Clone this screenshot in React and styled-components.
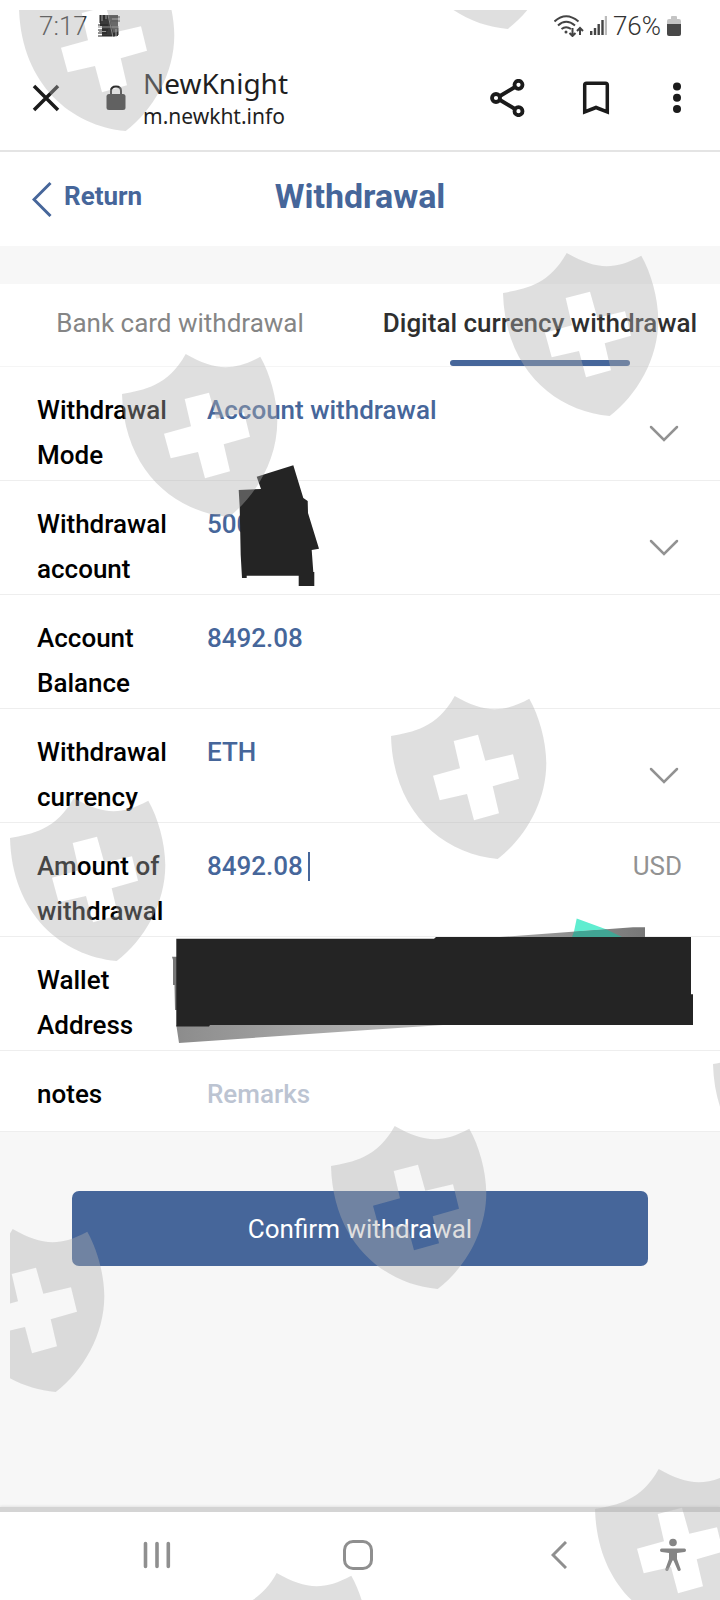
import React, { useState } from 'react';
import styled, { createGlobalStyle } from 'styled-components';

const SHIELDS = [
  [19, 8], [401, -94], [503, 293], [122, 394], [391, 736], [10, 838],
  [713, 1064], [331, 1166], [-51, 1269], [595, 1509], [213, 1613],
];

const Chevron = () => (
  <ChevronIcon viewBox="0 0 36 20" aria-hidden="true">
    <path d="M5 4 L18 17 L31 4" />
  </ChevronIcon>
);

const StatusIcons = () => (
  <>
    <svg width="30" height="22" viewBox="549 15 30 22" fill="none" stroke="#444" strokeWidth="2" aria-hidden="true">
      <path d="M549.500 21.500 Q561 11 573.500 21.500 M553 25.500 Q561 18 570 25.500 M556.500 29 Q561 25.500 566 29" />
      <circle cx="561" cy="32" r="1.500" fill="#444" stroke="none" />
      <path d="M567.500 28 V35.500 M564.500 33 L567.500 36 L570.500 33 M575 35 V28 M572 31 L575 28 L578 31" />
    </svg>
    <svg width="17" height="20" viewBox="585 17 17 20" strokeWidth="2.400" stroke="#444" aria-hidden="true">
      <path d="M586.200 32 V36 M590 29 V36 M593.700 25 V36 M597.500 21 V36" />
      <path d="M601 17 V36" stroke="#bbb" />
    </svg>
  </>
);

const Watermark = () => (
  <WatermarkLayer aria-hidden="true">
    {SHIELDS.map(([x, y]) => (
      <path
        key={`${x},${y}`}
        transform={`translate(${x - 10} ${y - 10})`}
        fillRule="evenodd"
        d="M0 0 C22 -4 46 -8 63.700 -40 C92 -24 110 -22 138.300 -37.300 C148 -20 155 4 155.300 27 C155.300 66 134 102 106.700 123 C52 118 2 76 0 0 Z M62.700 5 L87 -1.300 L94.300 24.700 L122 18.300 L128 42.700 L101.700 50.300 L108 77.300 L83 84.300 L76 58 L48.700 64.300 L42 39.700 L69 32.300 Z"
      />
    ))}
  </WatermarkLayer>
);

const App = () => {
  const [amount, setAmount] = useState('8492.08');
  const [notes, setNotes] = useState('');
  const [wallet, setWallet] = useState('');

  return (
    <Page>
      <GlobalStyle />
      <StatusBar>
        <StatusText>7:17</StatusText>
        <Scribble viewBox="0 0 22 22" aria-hidden="true">
          <path d="M2 0 H20 V21 H4 V11 H2 Z" fill="#3a3a3a" />
          <path d="M0 12 H21 M10 0 L15 22" stroke="#888" />
          <path d="M0 10 H10 M0 15 H10 M0 18 H9 M0 21 H14 M2 0 V8 M6 0 V5 M12 2 H22 M13 6 H22 M16 14 V22 M20 13 V20" stroke="#222" />
          <path d="M4 0 V6 M8 0 V4 M14 4 H22 M1 16.500 H8 M18 14 V22" stroke="#999" />
        </Scribble>
        <StatusRight>
          <StatusIcons />
          <StatusText>76%</StatusText>
          <svg width="14" height="21" viewBox="0 0 14 21" aria-hidden="true">
            <path d="M0 9 V5 Q0 3 2 3 H4 V1 Q4 0 5 0 H9 Q10 0 10 1 V3 H12 Q14 3 14 5 V9 Z" fill="#c4c4c4" />
            <path d="M0 8 H14 V18 Q14 20 12 20 H2 Q0 20 0 18 Z" fill="#484848" />
          </svg>
        </StatusRight>
      </StatusBar>

      <BrowserBar>
        <IconButton $width={36} aria-label="Close">
          <svg width="28" height="28" viewBox="0 0 28 28" stroke="#1b1b1b" strokeWidth="3.500" aria-hidden="true">
            <path d="M2 2 L26 26 M26 2 L2 26" />
          </svg>
        </IconButton>
        <Lock viewBox="0 0 20 26" aria-hidden="true">
          <rect x="0.500" y="9" width="19" height="16" rx="2.500" />
          <path d="M5 10 V6 Q5 1.500 10 1.500 Q15 1.500 15 6 V10" fill="none" stroke="#2e2e2e" strokeWidth="2" />
        </Lock>
        <SiteInfo>
          <SiteName>NewKnight</SiteName>
          <SiteUrl>m.newkht.info</SiteUrl>
        </SiteInfo>
        <Actions>
          <IconButton $width={44} aria-label="Share">
            <svg width="36" height="38" viewBox="0 0 36 38" fill="none" stroke="#1b1b1b" strokeWidth="3.800" aria-hidden="true">
              <path d="M11 17 L26 8 M11 21 L26 30" />
              <circle cx="7" cy="19" r="4" />
              <circle cx="29.500" cy="5.800" r="4" />
              <circle cx="29.500" cy="32.200" r="4" />
            </svg>
          </IconButton>
          <IconButton $width={44} aria-label="Bookmark">
            <svg width="28" height="34" viewBox="0 0 28 34" fill="none" stroke="#1b1b1b" strokeWidth="3.500" aria-hidden="true">
              <path d="M2.700 31 V4 Q2.700 2.200 4.500 2.200 H23.500 Q25.300 2.200 25.300 4 V31 L14 26.500 Z" />
            </svg>
          </IconButton>
          <IconButton $width={28} aria-label="More">
            <svg width="8" height="32" viewBox="0 0 8 32" fill="#1b1b1b" aria-hidden="true">
              <circle cx="4" cy="4.500" r="4" />
              <circle cx="4" cy="15.700" r="4" />
              <circle cx="4" cy="27" r="4" />
            </svg>
          </IconButton>
        </Actions>
      </BrowserBar>

      <Header>
        <BackLink href="#back">
          <svg width="20" height="36" viewBox="0 0 20 36" fill="none" stroke="#46669a" strokeWidth="3" aria-hidden="true">
            <path d="M18.500 2 L2 18.500 L18.500 35" />
          </svg>
          <span>Return</span>
        </BackLink>
        <Title>Withdrawal</Title>
      </Header>

      <Tabs>
        <Tab>Bank card withdrawal</Tab>
        <Tab $active>Digital currency withdrawal</Tab>
      </Tabs>

      <Form id="withdrawal" onSubmit={(e) => e.preventDefault()}>
        <Row>
          <Label htmlFor="mode">Withdrawal Mode</Label>
          <Field>
            <Select id="mode"><option>Account withdrawal</option></Select>
          </Field>
          <Chevron />
        </Row>
        <Row>
          <Label htmlFor="account">Withdrawal account</Label>
          <Field>
            <Select id="account"><option>500</option></Select>
            <AccountMask viewBox="237 464 84 124" aria-hidden="true">
              <path d="M238.700 490 L261 489 L256.700 476.700 L293.300 465.300 L303.300 498 L307.700 501 L308 513 L319 548.700 L311.700 550 L313.300 572 L314.300 572 V586 H298.700 V575.700 H246.700 V578 H242 L240.700 555 L239.700 507 Z" fill="#242424" />
            </AccountMask>
          </Field>
          <Chevron />
        </Row>
        <Row>
          <Label as="span">Account Balance</Label>
          <Field>8492.08</Field>
        </Row>
        <Row>
          <Label htmlFor="currency">Withdrawal currency</Label>
          <Field>
            <Select id="currency"><option>ETH</option></Select>
          </Field>
          <Chevron />
        </Row>
        <Row>
          <Label htmlFor="amount">Amount of withdrawal</Label>
          <Field>
            <AmountInput id="amount" value={amount} onChange={(e) => setAmount(e.target.value)} />
            <Caret />
          </Field>
          <Unit>USD</Unit>
        </Row>
        <Row>
          <Label htmlFor="wallet">Wallet Address</Label>
          <Field>
            <Input id="wallet" value={wallet} onChange={(e) => setWallet(e.target.value)} />
            <WalletMask viewBox="170 918 526 128" aria-hidden="true">
              <defs>
                <linearGradient id="upper"><stop offset="0" stopColor="#aaa" /><stop offset="1" stopColor="#777" /></linearGradient>
                <linearGradient id="lower"><stop offset="0" stopColor="#8c8c8c" /><stop offset="0.500" stopColor="#a6a6a6" /><stop offset="1" stopColor="#bbb" /></linearGradient>
              </defs>
              <path d="M486 938 L633 927.300 H645 V938 Z" fill="url(#upper)" />
              <path d="M576.700 918.500 L606 929.300 L574 931.500 Z" fill="#5fedd0" />
              <path d="M606 929.300 L574 931.500 L571.700 938 H624 Z" fill="#41a594" />
              <path d="M172 956.700 H178 V1010 H175 L174.500 985 H173 V960 Z" fill="#777" />
              <path d="M176.300 1025 L179 1043 L360 1030.500 L443 1025 Z" fill="url(#lower)" />
              <path d="M176.300 938.700 H434 L436 937 H691 V994.300 H693 V1025 H210 L209 1026.500 H176.300 Z" fill="#242424" />
            </WalletMask>
          </Field>
        </Row>
        <Row>
          <Label htmlFor="notes">notes</Label>
          <Field>
            <Input id="notes" placeholder="Remarks" value={notes} onChange={(e) => setNotes(e.target.value)} />
          </Field>
        </Row>
      </Form>
      <SubmitArea>
        <Submit type="submit" form="withdrawal">Confirm withdrawal</Submit>
      </SubmitArea>

      <NavBar>
        <NavButton aria-label="Recents">
          <svg width="28" height="28" viewBox="0 0 28 28" stroke="#8f8f8f" strokeWidth="3.600" strokeLinecap="round" aria-hidden="true">
            <path d="M2.500 2.500 V25.500 M14 2.500 V25.500 M25.300 2.500 V25.500" />
          </svg>
        </NavButton>
        <NavButton aria-label="Home">
          <svg width="30" height="30" viewBox="0 0 30 30" fill="none" stroke="#8f8f8f" strokeWidth="3" aria-hidden="true">
            <rect x="1.500" y="1.500" width="27" height="27" rx="8.500" />
          </svg>
        </NavButton>
        <NavButton aria-label="Back">
          <svg width="16" height="28" viewBox="0 0 16 28" fill="none" stroke="#8f8f8f" strokeWidth="3" aria-hidden="true">
            <path d="M15 1 L2 14 L15 27" />
          </svg>
        </NavButton>
        <NavButton aria-label="Accessibility">
          <svg width="26" height="34" viewBox="0 0 26 34" fill="#858585" aria-hidden="true">
            <circle cx="13" cy="4.500" r="3.800" />
            <path d="M1.500 10.500 H24.500 Q26 10.500 26 12.200 Q26 14 24.500 14 L17 15 V21 L20.800 31.500 Q20 34 17.800 32.600 L13.500 22.500 H12.500 L8.200 32.600 Q6 34 5.200 31.500 L9 21 V15 L1.500 14 Q0 14 0 12.200 Q0 10.500 1.500 10.500 Z" />
          </svg>
        </NavButton>
      </NavBar>
      <Watermark />
    </Page>
  );
};

const GlobalStyle = createGlobalStyle`
  * {
    box-sizing: border-box;
  }
  body {
    margin: 0;
    background: #f7f7f7;
    font-family: Roboto, "Liberation Sans", sans-serif;
    font-size: 26px;
  }
  svg {
    display: block;
    flex-shrink: 0;
  }
  button, input, select {
    font: inherit;
    color: inherit;
    border: none;
    background: none;
    padding: 0;
    outline: none;
  }
`;

const Page = styled.div`
  position: relative;
  display: flex;
  flex-direction: column;
  min-height: 100vh;
  overflow: hidden;
`;

const StatusBar = styled.div`
  display: flex;
  align-items: center;
  height: 52px;
  padding: 0 39px;
  background: #fff;
`;

const StatusText = styled.span`
  font-weight: 300;
  color: #333;
`;

const Scribble = styled.svg`
  width: 22px;
  height: 22px;
  margin-left: 10px;
`;

const StatusRight = styled.div`
  display: flex;
  align-items: center;
  gap: 6px;
  margin-left: auto;
`;

const BrowserBar = styled.div`
  display: flex;
  align-items: center;
  height: 100px;
  padding: 0 29px 6px 28px;
  border-bottom: 2px solid #e4e4e4;
  background: #fff;
`;

const IconButton = styled.button`
  display: flex;
  align-items: center;
  justify-content: center;
  width: ${(props) => props.$width}px;
  height: 44px;
`;

const Lock = styled.svg`
  width: 20px;
  height: 26px;
  margin: 0 17px 0 42px;
  fill: #2e2e2e;
`;

const SiteInfo = styled.div`
  font-family: "Noto Sans", sans-serif;
  color: #1f1f1f;
`;

const SiteName = styled.div`
  font-size: 28px;
  line-height: 36px;
`;

const SiteUrl = styled.div`
  font-size: 21px;
  line-height: 30px;
`;

const Actions = styled.div`
  display: flex;
  gap: 45px;
  margin-left: auto;
`;

const Header = styled.header`
  display: grid;
  grid-template-columns: 1fr auto 1fr;
  align-items: center;
  height: 94px;
  padding: 0 32px 6px;
  background: #fff;
  color: #46669a;
`;

const BackLink = styled.a`
  display: flex;
  align-items: flex-start;
  gap: 12px;
  padding-top: 6px;
  color: inherit;
  font-weight: 700;
  line-height: 30px;
  text-decoration: none;
`;

const Title = styled.h1`
  margin: 0;
  font-weight: 700;
  font-size: 34px;
`;

const Tabs = styled.nav`
  display: grid;
  grid-template-columns: 1fr 1fr;
  margin-top: 38px;
  border-bottom: 1px solid #f5f5f5;
  background: #fff;
`;

const Tab = styled.button`
  position: relative;
  height: 82px;
  padding-bottom: 4px;
  color: ${(props) => (props.$active ? '#2f2f2f' : '#858585')};
  font-weight: ${(props) => (props.$active ? 500 : 400)};
  white-space: nowrap;

  &::after {
    content: '';
    display: ${(props) => (props.$active ? 'block' : 'none')};
    position: absolute;
    left: 25%;
    bottom: 0;
    width: 50%;
    height: 6px;
    border-radius: 3px;
    background: #46669a;
  }
`;

const Form = styled.form`
  background: #fff;
`;

const Row = styled.div`
  display: flex;
  min-height: 81px;
  padding: 21px 38px 2px 37px;
  border-bottom: 1px solid #eee;
  line-height: 45px;
`;

const Label = styled.label`
  flex: 0 0 134px;
  margin-right: 36px;
  color: #000;
  font-weight: 500;
`;

const Field = styled.div`
  position: relative;
  display: flex;
  flex: 1;
  align-items: flex-start;
  color: #46669a;
  font-weight: 500;
`;

const Select = styled.select`
  appearance: none;
  width: 100%;
  height: 45px;
`;

const Input = styled.input`
  width: 100%;
  height: 45px;

  &::placeholder {
    color: #bcc4d2;
    opacity: 1;
  }
`;

const AmountInput = styled(Input)`
  field-sizing: content;
  width: auto;
`;

const Caret = styled.span`
  width: 2px;
  height: 29px;
  margin: 8px 0 0 5px;
  background: #46669a;
`;

const Unit = styled.span`
  color: #929292;
`;

const ChevronIcon = styled.svg`
  align-self: center;
  width: 36px;
  height: 20px;
  fill: none;
  stroke: #929292;
  stroke-width: 2.5;
  stroke-linecap: round;
`;

const AccountMask = styled.svg`
  position: absolute;
  top: -38px;
  left: 30px;
  width: 84px;
  height: 124px;
`;

const WalletMask = styled.svg`
  position: absolute;
  top: -40px;
  left: -37px;
  width: 526px;
  height: 128px;
`;

const SubmitArea = styled.div`
  flex: 1;
  padding: 59px 10% 0;
`;

const Submit = styled.button`
  width: 100%;
  height: 75px;
  border-radius: 7px;
  background: #46669a;
  color: #fff;
`;

const NavBar = styled.nav`
  display: grid;
  grid-template-columns: 1fr 1fr 1fr 28px;
  align-items: center;
  height: 93px;
  padding: 0 33px 2px 56px;
  border-top: 5px solid #d4d4d4;
  box-shadow: 0 -1px 2px #e4e4e4;
  background: #fff;
`;

const NavButton = styled.button`
  display: flex;
  align-items: center;
  justify-content: center;
  height: 48px;
`;

const WatermarkLayer = styled.svg`
  position: absolute;
  top: 10px;
  left: 10px;
  width: calc(100% - 10px);
  height: calc(100% - 10px);
  fill: rgba(175, 175, 175, 0.4);
  pointer-events: none;
`;

export default App;
